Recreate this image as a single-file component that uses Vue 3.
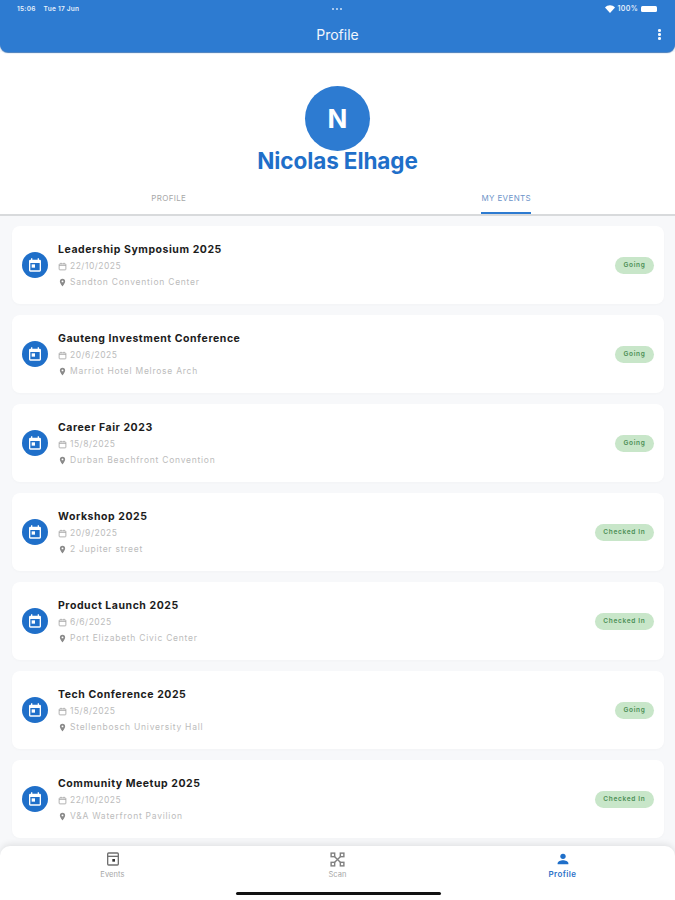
<template>
  <div class="screen">
    <header class="appbar">
      <div class="status">
        <span class="status-left"><span>15:06</span><span>Tue 17 Jun</span></span>
        <span class="status-dots"><i></i><i></i><i></i></span>
        <span class="status-right">
          <svg width="10" height="8" viewBox="0 0 18 14"><path d="M9 14 0 4.5C5-1 13-1 18 4.5z" fill="#fff" /></svg>
          <span class="pct">100%</span>
          <span class="battery"></span>
        </span>
      </div>
      <div class="bar-row">
        <span class="bar-title">Profile</span>
        <span class="kebab"><i></i><i></i><i></i></span>
      </div>
    </header>

    <section class="head">
      <div class="avatar">N</div>
      <h1 class="name">Nicolas Elhage</h1>
    </section>

    <nav class="tabs">
      <div class="tab"><span class="tab-label">PROFILE</span></div>
      <div class="tab active"><span class="tab-label">MY EVENTS</span></div>
    </nav>

    <main class="list">
      <article v-for="e in events" :key="e.title" class="card">
        <div class="badge-icon">
          <svg width="16" height="16" viewBox="0 0 24 24">
            <path fill="#fff" d="M19 4h-1V2h-2v2H8V2H6v2H5a2 2 0 0 0-2 2v14a2 2 0 0 0 2 2h14a2 2 0 0 0 2-2V6a2 2 0 0 0-2-2zm0 16H5V9h14v11z" />
            <rect fill="#fff" x="7" y="11" width="5" height="5" />
          </svg>
        </div>
        <div class="info">
          <div class="title">{{ e.title }}</div>
          <div class="meta date">
            <svg width="9" height="9" viewBox="0 0 24 24" fill="none" stroke="#9a9a9a" stroke-width="2">
              <rect x="3" y="5" width="18" height="16" rx="2" />
              <path d="M3 9h18M8 2v4M16 2v4" />
            </svg>
            {{ e.date }}
          </div>
          <div class="meta">
            <svg width="9" height="9" viewBox="0 0 24 24"><path fill="#8a8a8a" fill-rule="evenodd" d="M12 2a7 7 0 0 0-7 7c0 5 7 13 7 13s7-8 7-13a7 7 0 0 0-7-7zm0 9.5a2.5 2.5 0 1 1 0-5 2.5 2.5 0 0 1 0 5z" /></svg>
            {{ e.place }}
          </div>
        </div>
        <span class="pill">{{ e.status }}</span>
      </article>
    </main>

    <footer class="bottom">
      <div class="nav-item">
        <svg width="16" height="16" viewBox="0 0 24 24" fill="none" stroke="#707070" stroke-width="2">
          <rect x="4" y="3" width="16" height="18" rx="1.500" />
          <path d="M4 8h16" />
          <rect x="11" y="12" width="4" height="4" fill="#333" stroke="none" />
        </svg>
        <span>Events</span>
      </div>
      <div class="nav-item">
        <svg class="scan-icon" width="17" height="17" viewBox="0 0 24 24" fill="none" stroke="#808080" stroke-width="2">
          <rect x="3" y="3" width="5" height="5" />
          <rect x="16" y="3" width="5" height="5" />
          <rect x="3" y="16" width="5" height="5" />
          <rect x="16" y="16" width="5" height="5" />
          <path d="M8 8l8 8M16 8l-8 8" />
        </svg>
        <span>Scan</span>
      </div>
      <div class="nav-item on">
        <svg width="16" height="16" viewBox="0 0 24 24" fill="#1f6fc9">
          <circle cx="12" cy="8" r="4" />
          <path d="M4 20v-1.500c0-3 4.500-4.500 8-4.500s8 1.500 8 4.500V20z" />
        </svg>
        <span>Profile</span>
      </div>
      <div class="home-bar"></div>
    </footer>
  </div>
</template>

<script setup>
const events = [
  { title: 'Leadership Symposium 2025', date: '22/10/2025', place: 'Sandton Convention Center', status: 'Going' },
  { title: 'Gauteng Investment Conference', date: '20/6/2025', place: 'Marriot Hotel Melrose Arch', status: 'Going' },
  { title: 'Career Fair 2023', date: '15/8/2025', place: 'Durban Beachfront Convention', status: 'Going' },
  { title: 'Workshop 2025', date: '20/9/2025', place: '2 Jupiter street', status: 'Checked In' },
  { title: 'Product Launch 2025', date: '6/6/2025', place: 'Port Elizabeth Civic Center', status: 'Checked In' },
  { title: 'Tech Conference 2025', date: '15/8/2025', place: 'Stellenbosch University Hall', status: 'Going' },
  { title: 'Community Meetup 2025', date: '22/10/2025', place: 'V&A Waterfront Pavilion', status: 'Checked In' }
]
</script>

<style>
html, body {
  margin: 0;
  background: #fff;
}
</style>

<style scoped>
.screen {
  width: 675px;
  height: 900px;
  display: flex;
  flex-direction: column;
  overflow: hidden;
  background: #f7f8fa;
  font-family: Inter, "Liberation Sans", sans-serif;
}
.appbar {
  height: 52px;
  flex: none;
  box-sizing: border-box;
  background: #2d7bd1;
  border-radius: 0 0 8px 8px;
  box-shadow: 0 1px 1px rgba(20, 90, 170, 0.8);
  color: #fff;
  position: relative;
  z-index: 2;
}
.status {
  height: 17px;
  padding: 0 18px 0 17px;
  display: flex;
  align-items: center;
  justify-content: space-between;
  font-size: 6.5px;
  font-weight: 600;
  color: #e6f0fb;
}
.status-left {
  width: 120px;
  display: flex;
  gap: 8px;
  letter-spacing: 0.25px;
}
.status-dots {
  display: flex;
  gap: 2px;
}
.status-dots i {
  width: 2px;
  height: 2px;
  border-radius: 50%;
  background: #cfe2f7;
}
.status-right {
  width: 120px;
  display: flex;
  align-items: center;
  justify-content: flex-end;
  gap: 3px;
}
.pct {
  font-size: 7px;
  letter-spacing: 0.3px;
}
.battery {
  width: 16px;
  height: 6px;
  border-radius: 1.5px;
  background: #fff;
}
.bar-row {
  height: 35px;
  display: flex;
  align-items: center;
  justify-content: center;
  position: relative;
}
.bar-title {
  font-size: 14px;
  color: #f1f6fd;
}
.kebab {
  position: absolute;
  right: 14.500px;
  top: 12px;
  display: flex;
  flex-direction: column;
  gap: 1.500px;
}
.kebab i {
  width: 2.500px;
  height: 2.500px;
  border-radius: 50%;
  background: #f4f8fd;
}
.head {
  background: #fff;
  flex: none;
  height: 138px;
  box-sizing: border-box;
  padding-top: 34px;
  display: flex;
  flex-direction: column;
  align-items: center;
}
.avatar {
  width: 65px;
  height: 65px;
  border-radius: 50%;
  background: #2d7bd1;
  color: #fff;
  font-size: 26px;
  font-weight: 700;
  display: flex;
  align-items: center;
  justify-content: center;
}
.name {
  margin: 0;
  font-size: 22.500px;
  line-height: 20px;
  font-weight: 700;
  color: #1f6fc9;
  letter-spacing: -0.1px;
}
.tabs {
  flex: none;
  height: 24px;
  display: grid;
  grid-template-columns: 1fr 1fr;
  background: #fff;
  border-bottom: 2px solid #d8dadc;
}
.tab {
  display: flex;
  justify-content: center;
}
.tab-label {
  font-size: 8px;
  line-height: 16px;
  color: #a8a8a8;
  letter-spacing: 0.35px;
  height: 24px;
  box-sizing: border-box;
}
.active .tab-label {
  color: #6d94c9;
  border-bottom: 2px solid #2d7bd1;
}
.list {
  flex: 1;
  min-height: 0;
  overflow: hidden;
  padding: 10px 11px 0 12px;
  display: flex;
  flex-direction: column;
  gap: 11px;
}
.card {
  flex: none;
  height: 78px;
  box-sizing: border-box;
  padding: 0 10px;
  background: #fff;
  border-radius: 8px;
  box-shadow: 0 1px 3px rgba(0, 0, 0, 0.025);
  display: flex;
  align-items: center;
}
.badge-icon {
  width: 26px;
  height: 26px;
  flex: none;
  border-radius: 50%;
  background: #1f6fc9;
  display: flex;
  align-items: center;
  justify-content: center;
}
.info {
  flex: 1;
  margin-left: 10px;
  display: flex;
  flex-direction: column;
  gap: 4px;
  padding-top: 1px;
}
.title {
  font-size: 10.500px;
  line-height: 13px;
  font-weight: 700;
  color: #1c1c1c;
  letter-spacing: 0.55px;
}
.meta {
  display: flex;
  align-items: center;
  gap: 3px;
  font-size: 8.500px;
  line-height: 12px;
  color: #bcbcbc;
  letter-spacing: 0.75px;
}
.meta.date {
  letter-spacing: 0.5px;
}
.pill {
  height: 17px;
  padding: 0 8.500px;
  border-radius: 9px;
  background: #c8e6c9;
  color: #4c8f56;
  font-size: 6.5px;
  font-weight: 600;
  letter-spacing: 0.7px;
  line-height: 17px;
}
.bottom {
  flex: none;
  height: 54px;
  margin-top: -8px;
  background: #fff;
  border-radius: 10px 10px 0 0;
  box-shadow: 0 -2px 6px rgba(0, 0, 0, 0.09);
  display: grid;
  grid-template-columns: repeat(3, 1fr);
  position: relative;
  z-index: 2;
}
.nav-item {
  display: flex;
  flex-direction: column;
  align-items: center;
  padding-top: 5px;
  gap: 2px;
  font-size: 7.5px;
  line-height: 11px;
  color: #a6a6a6;
  letter-spacing: 0.1px;
}
.scan-icon {
  margin-bottom: -1px;
}
.nav-item.on {
  color: #2d72c8;
  font-weight: 600;
  font-size: 8px;
  letter-spacing: 0.4px;
}
.home-bar {
  position: absolute;
  left: 236px;
  bottom: 5px;
  width: 205px;
  height: 3px;
  background: #111;
  border-radius: 2px;
}
</style>
